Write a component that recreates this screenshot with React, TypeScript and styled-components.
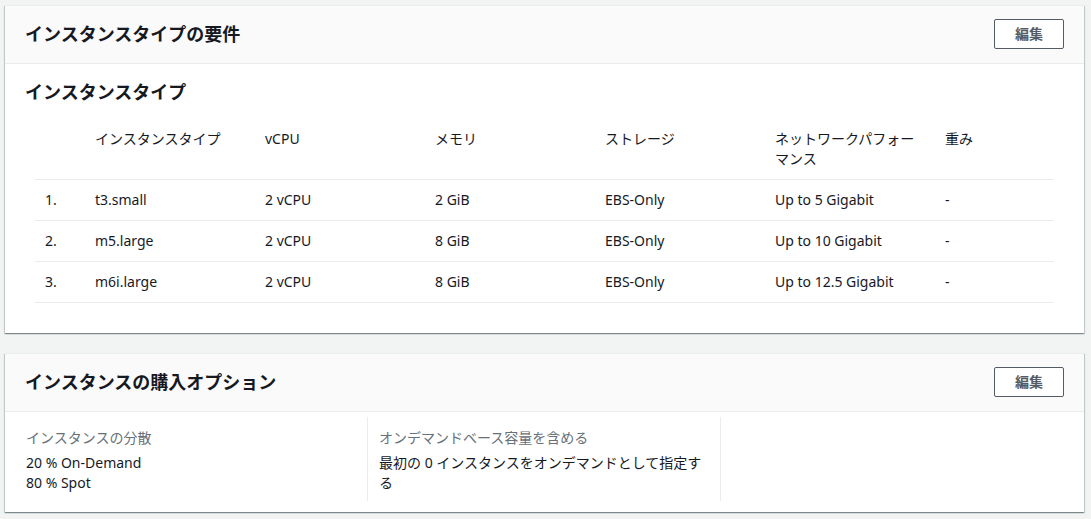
import React from "react";
import styled, { createGlobalStyle } from "styled-components";

const GlobalStyle = createGlobalStyle`
  html, body {
    margin: 0;
    background: #f2f3f3;
  }
  body {
    font-family: "Noto Sans", "Noto Sans CJK JP", sans-serif;
    font-size: 14px;
    line-height: 20px;
    color: #16191f;
  }
`;

const rows = [
    { type: "t3.small", vcpu: "2 vCPU", memory: "2 GiB", storage: "EBS-Only", network: "Up to 5 Gigabit", weight: "-" },
    { type: "m5.large", vcpu: "2 vCPU", memory: "8 GiB", storage: "EBS-Only", network: "Up to 10 Gigabit", weight: "-" },
    { type: "m6i.large", vcpu: "2 vCPU", memory: "8 GiB", storage: "EBS-Only", network: "Up to 12.5 Gigabit", weight: "-" },
];

export default () => {
    return (
        <Page>
            <GlobalStyle />
            <Card>
                <CardHeader>
                    <Title>インスタンスタイプの要件</Title>
                    <Button type="button">編集</Button>
                </CardHeader>
                <CardBody>
                    <SubTitle>インスタンスタイプ</SubTitle>
                    <Table>
                        <colgroup>
                            <col style={{ width: 50 }} />
                            <col style={{ width: 170 }} />
                            <col style={{ width: 170 }} />
                            <col style={{ width: 170 }} />
                            <col style={{ width: 170 }} />
                            <col style={{ width: 170 }} />
                            <col />
                        </colgroup>
                        <thead>
                            <tr>
                                <Th />
                                <Th>インスタンスタイプ</Th>
                                <Th>vCPU</Th>
                                <Th>メモリ</Th>
                                <Th>ストレージ</Th>
                                <Th>ネットワークパフォーマンス</Th>
                                <Th>重み</Th>
                            </tr>
                        </thead>
                        <tbody>
                            {rows.map((row, i) => {
                                return (
                                    <tr key={row.type}>
                                        <Td>{i + 1}.</Td>
                                        <Td>{row.type}</Td>
                                        <Td>{row.vcpu}</Td>
                                        <Td>{row.memory}</Td>
                                        <Td>{row.storage}</Td>
                                        <Td>{row.network}</Td>
                                        <Td>{row.weight}</Td>
                                    </tr>
                                );
                            })}
                        </tbody>
                    </Table>
                </CardBody>
            </Card>

            <Card>
                <CardHeader>
                    <Title>インスタンスの購入オプション</Title>
                    <Button type="button">編集</Button>
                </CardHeader>
                <Columns>
                    <Column>
                        <Label>インスタンスの分散</Label>
                        <div>20 % On-Demand</div>
                        <div>80 % Spot</div>
                    </Column>
                    <Column $divider>
                        <Label>オンデマンドベース容量を含める</Label>
                        <div>最初の 0 インスタンスをオンデマンドとして指定する</div>
                    </Column>
                    <Column $divider />
                </Columns>
            </Card>
        </Page>
    );
};

const Page = styled.div`
  display: flex;
  flex-direction: column;
  gap: 20px;
  padding: 5px 7px 5px 5px;
`;

const Card = styled.div`
  background: #fff;
  border-top: 1px solid #eaeded;
  box-shadow: 0 1px 1px 0 rgba(0, 28, 36, 0.3), 1px 1px 1px 0 rgba(0, 28, 36, 0.15),
    -1px 1px 1px 0 rgba(0, 28, 36, 0.15);
`;

const CardHeader = styled.div`
  display: flex;
  justify-content: space-between;
  align-items: center;
  padding: 13px 20px 14px;
  background: #fafafa;
  border-bottom: 1px solid #eaeded;
`;

const Title = styled.h2`
  margin: 0;
  font-size: 18px;
  line-height: 22px;
  font-weight: 700;
`;

const Button = styled.button`
  font-family: inherit;
  font-size: 14px;
  line-height: 20px;
  font-weight: 700;
  color: #545b64;
  background: #fff;
  border: 1px solid #545b64;
  border-radius: 2px;
  padding: 4px 20px;
  cursor: pointer;
`;

const CardBody = styled.div`
  padding: 17px 20px 30px;
`;

const SubTitle = styled.h3`
  margin: 0 0 15px;
  font-size: 18px;
  line-height: 22px;
  font-weight: 700;
`;

const Table = styled.table`
  width: calc(100% - 20px);
  margin: 0 10px;
  border-collapse: collapse;
  table-layout: fixed;
`;

const Th = styled.th`
  text-align: left;
  vertical-align: top;
  font-weight: 400;
  padding: 11px 10px 10px;
  border-bottom: 1px solid #eaeded;
`;

const Td = styled.td`
  padding: 10px 10px;
  border-bottom: 1px solid #eaeded;
`;

const Columns = styled.div`
  display: grid;
  grid-template-columns: repeat(3, 1fr);
  padding: 5px 11px 11px 9px;
`;

const Column = styled.div<{ $divider?: boolean }>`
  padding: 11px 11px 8px;
  border-left: 1px solid ${(p) => (p.$divider ? "#eaeded" : "transparent")};
`;

const Label = styled.div`
  color: #687078;
  margin-bottom: 5px;
`;
